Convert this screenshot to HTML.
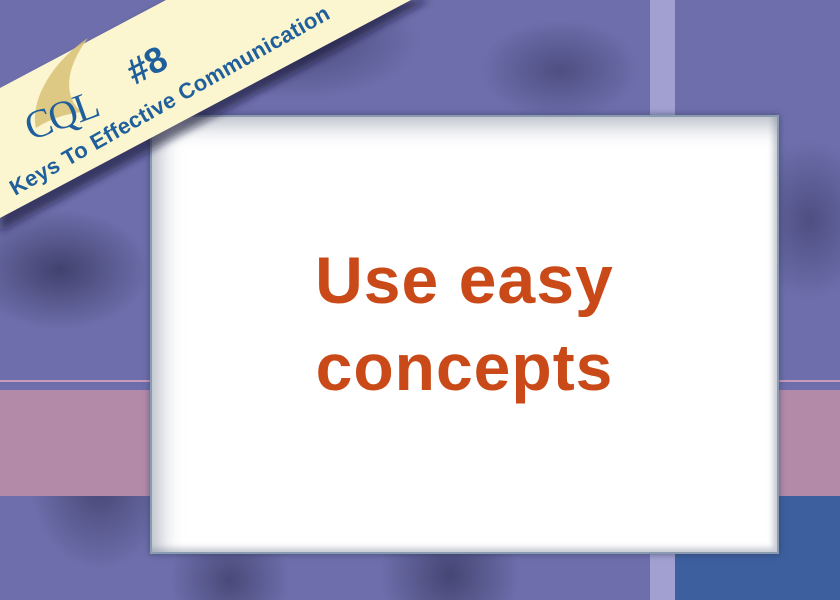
<!DOCTYPE html>
<html><head><meta charset="utf-8"><style>
html,body{margin:0;padding:0}
body{width:840px;height:600px;overflow:hidden;position:relative;background:#6d6eab;font-family:"Liberation Sans",sans-serif}
.abs{position:absolute}
.card{left:152px;top:117px;width:625px;height:435px;background:#fff;box-shadow:0 0 0 2px #8a9ab0, 0 0 6px 2px rgba(40,50,80,.6);}
.card .inner{position:absolute;inset:0;box-shadow:inset 14px 14px 22px -6px rgba(120,130,150,.55), inset -4px -4px 6px rgba(120,130,150,.4)}
.t{position:absolute;left:0;width:625px;text-align:center;color:#c94a18;font-weight:bold;font-size:66px;letter-spacing:1px}
</style></head><body>
<div class="abs" style="left:0;top:0;width:840px;height:600px;background:
radial-gradient(ellipse 90px 60px at 60px 270px,rgba(30,30,60,.55),transparent),
radial-gradient(ellipse 70px 90px at 100px 480px,rgba(30,30,60,.5),transparent),
radial-gradient(ellipse 120px 60px at 300px 40px,rgba(40,40,80,.5),transparent),
radial-gradient(ellipse 80px 50px at 560px 70px,rgba(40,40,80,.45),transparent),
radial-gradient(ellipse 70px 70px at 450px 575px,rgba(30,30,60,.5),transparent),
radial-gradient(ellipse 60px 80px at 810px 220px,rgba(40,40,80,.45),transparent),
radial-gradient(ellipse 60px 60px at 230px 580px,rgba(30,30,60,.45),transparent);"></div>
<div class="abs" style="left:0;top:380px;width:840px;height:2px;background:#c79ab8"></div>
<div class="abs" style="left:0;top:390px;width:840px;height:106px;background:#b38aa8"></div>
<div class="abs" style="left:675px;top:496px;width:165px;height:104px;background:#3d5f9e"></div>
<div class="abs" style="left:650px;top:0;width:25px;height:600px;background:#a6a5d4;opacity:.9"></div>
<div class="abs card"><div class="inner"></div>
<div class="t" style="top:124px">Use <span style="font-size:68px">easy</span></div>
<div class="t" style="top:212px">concepts</div>
</div>
<svg class="abs" style="left:0;top:0" width="840" height="600">
<defs><filter id="s"><feGaussianBlur stdDeviation="4"/></filter></defs>
<polygon points="0,96 176,0 430,0 0,232" fill="rgba(20,20,50,.6)" filter="url(#s)"/>
<polygon points="0,88 166,0 411,0 0,218" fill="#fbf6d0"/>
<path d="M88,38 C52,62 30,100 36,128 C52,118 66,114 82,112 C64,98 64,70 88,38Z" fill="#d9c47a" opacity=".9"/>
<g transform="rotate(-20 32 138)">
<text x="30" y="140" font-family="Liberation Serif,serif" font-size="40" fill="#1f5f9c" letter-spacing="-2">CQL</text>
</g>
<g transform="rotate(-28 132 80)">
<text x="132" y="86" font-family="Liberation Sans,sans-serif" font-weight="bold" font-size="36" fill="#1f5f9c">#8</text>
</g>
<g transform="rotate(-29.4 15 196)">
<text x="15" y="196" font-family="Liberation Sans,sans-serif" font-weight="bold" font-size="22" fill="#1f5f9c" letter-spacing="0.3">Keys To Effective Communication</text>
</g>
</svg>
</body></html>
